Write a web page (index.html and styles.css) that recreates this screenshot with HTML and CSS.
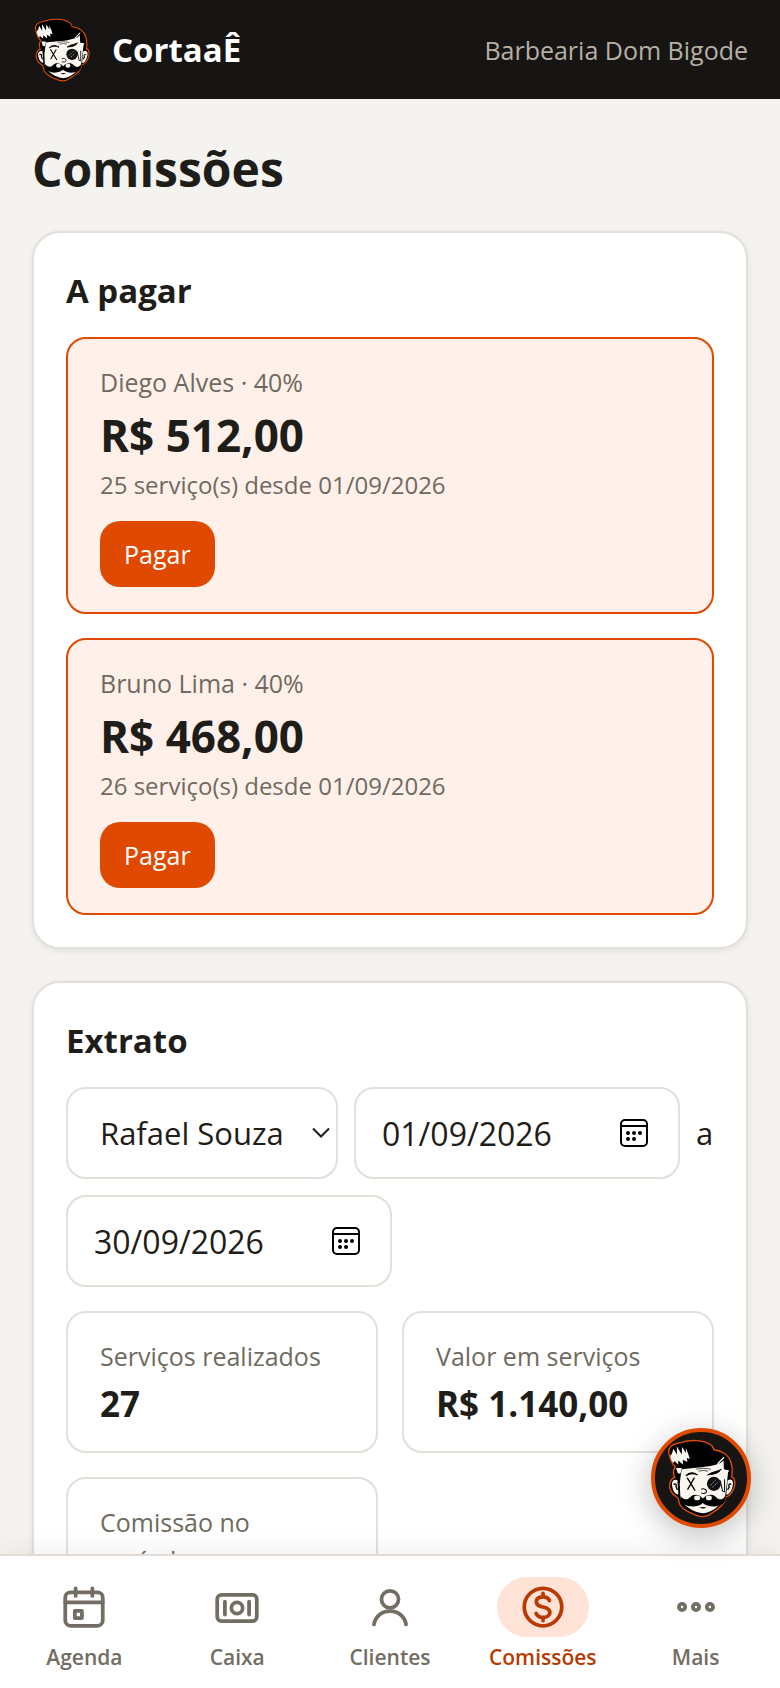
FILE: index.html
```html
<!DOCTYPE html>
<html lang="pt-BR">
<head>
  <meta charset="UTF-8" />
  <meta name="viewport" content="width=device-width, initial-scale=1.0"/>
  <title>Comissões | CortaaÊ</title>
  <link rel="stylesheet" href="styles.css">
</head>
<body>

  <svg class="sprite" aria-hidden="true">
    <symbol id="face" viewBox="72 66 206 236">
      <path d="M78 110C73 92 86 82 108 78C140 67 182 68 202 83C209 88 212 92 212 98C236 100 256 114 263 136C268 152 267 168 265 179C276 182 277 200 271 214C265 230 255 237 248 239C244 262 224 277 206 287C190 300 170 300 154 292C134 284 112 274 108 256C107 246 105 240 100 238C86 232 76 212 81 197C84 187 90 182 95 181C90 170 90 158 97 149C86 140 81 126 78 110Z" fill="#000" stroke="#e84e08" stroke-width="4"/>
      <path d="M116 156C150 152 200 152 233 137L241 130L242 158L255 160L251 196L246 234C238 262 206 286 180 288C152 285 120 266 112 242L110 200L112 182Z" fill="#faf7f0"/>
      <path d="M99 153L116 153L112 170L104 168ZM240 156L258 160L252 168L242 166Z" fill="#faf7f0"/>
      <path d="M103 189C90 184 84 196 88 210C91 222 97 232 106 231ZM253 190C264 182 273 192 268 207C265 220 259 232 249 232Z" fill="#faf7f0"/>
      <path d="M92 203C96 197 102 201 99 208L103 218M264 202C258 198 254 204 258 210L253 218" fill="none" stroke="#000" stroke-width="4"/>
      <path d="M82 115C88 111 88 104 91 95L102 113L101 88L116 112L117 90L129 108L128 92C132 103 137 112 140 126L131 123L133 135L119 128L120 142L106 130L105 142L94 132L91 138C85 132 82 123 82 115Z" fill="#faf7f0"/>
      <path d="M224 139L241 122" stroke="#faf7f0" stroke-width="4" stroke-linecap="round"/>
      <path d="M159 156Q180 151 203 156M166 162Q181 158 194 162" fill="none" stroke="#000" stroke-width="2"/>
      <path d="M128 176C138 165 150 164 164 174C154 169 140 169 128 176ZM194 173C206 163 218 165 232 158C225 170 212 172 194 173Z" fill="#000" stroke="#000" stroke-width="3"/>
      <path d="M133 183L155 219M153 183L134 216" stroke="#000" stroke-width="4" stroke-linecap="round"/>
      <circle cx="212" cy="200" r="21" fill="#111"/>
      <path d="M201 205L218 188M207 211L222 196" stroke="#ddd" stroke-width="2" stroke-dasharray="7 3"/>
      <path d="M231 190L238 222L244 224L244 186M174 216C183 213 190 217 190 222C190 229 180 230 174 227" fill="none" stroke="#000" stroke-width="3"/>
      <path d="M179 244C170 231 151 228 141 240C133 249 122 248 112 236C111 254 123 265 140 267C157 269 172 264 179 257C187 265 202 269 219 267C238 264 248 253 248 236C237 249 227 249 219 240C208 228 190 231 179 244Z" fill="#000"/>
      <ellipse cx="162" cy="242" rx="9" ry="7" fill="#faf7f0"/>
      <ellipse cx="197" cy="242" rx="9" ry="7" fill="#faf7f0"/>
      <path d="M169 271Q180 267 190 271Q180 276 169 271Z" fill="#000"/>
    </symbol>
    <symbol id="picker" viewBox="0 0 28 28">
      <rect x="1" y="1" width="26" height="26" rx="4" fill="none" stroke="#000" stroke-width="2"/>
      <path d="M1 7h26" stroke="#000" stroke-width="2"/>
      <circle cx="8" cy="14" r="2"/><circle cx="14" cy="14" r="2"/><circle cx="20" cy="14" r="2"/>
      <circle cx="8" cy="20" r="2"/><circle cx="14" cy="20" r="2"/>
    </symbol>
  </svg>

  <div class="app">
    <header class="topbar">
      <svg class="logo" aria-hidden="true"><use href="#face"/></svg>
      <span class="brand">CortaaÊ</span>
      <span class="shop">Barbearia Dom Bigode</span>
    </header>

    <main class="content">
      <h1>Comissões</h1>

      <section class="card">
        <h2>A pagar</h2>
        <div class="due-list">
          <div class="due">
            <div class="label">Diego Alves · 40%</div>
            <div class="amount">R$ 512,00</div>
            <div class="label since">25 serviço(s) desde 01/09/2026</div>
            <button class="pay" type="button">Pagar</button>
          </div>
          <div class="due">
            <div class="label">Bruno Lima · 40%</div>
            <div class="amount">R$ 468,00</div>
            <div class="label since">26 serviço(s) desde 01/09/2026</div>
            <button class="pay" type="button">Pagar</button>
          </div>
        </div>
      </section>

      <section class="card">
        <h2>Extrato</h2>
        <form class="filters">
          <div class="select">
            <select aria-label="Profissional">
              <option>Rafael Souza</option>
              <option>Diego Alves</option>
              <option>Bruno Lima</option>
            </select>
            <svg class="chevron" viewBox="0 0 18 12" aria-hidden="true"><path d="M1 1.500L9 9.500L17 1.500"/></svg>
          </div>
          <div class="date">
            <input type="text" inputmode="numeric" value="01/09/2026" aria-label="Data inicial">
            <button type="button" aria-label="Abrir calendário"><svg><use href="#picker"/></svg></button>
          </div>
          <span>a</span>
          <div class="date">
            <input type="text" inputmode="numeric" value="30/09/2026" aria-label="Data final">
            <button type="button" aria-label="Abrir calendário"><svg><use href="#picker"/></svg></button>
          </div>
        </form>

        <div class="stats">
          <div class="stat">
            <div class="label">Serviços realizados</div>
            <div class="total">27</div>
          </div>
          <div class="stat">
            <div class="label">Valor em serviços</div>
            <div class="total">R$ 1.140,00</div>
          </div>
          <div class="stat">
            <div class="label">Comissão no período</div>
            <div class="total">R$ 456,00</div>
          </div>
        </div>
      </section>
    </main>

    <nav class="tabs">
      <a href="#">
        <span class="icon"><svg viewBox="0 0 24 24"><rect x="3" y="5" width="18" height="16" rx="2.500"/><path d="M3 9.800h18M8 3v3.700M16 3v3.700"/><rect x="7.600" y="13.900" width="3.400" height="3.400"/></svg></span>
        Agenda
      </a>
      <a href="#">
        <span class="icon"><svg viewBox="0 0 24 24"><rect x="2.500" y="6.200" width="19" height="12.600" rx="2"/><circle cx="12" cy="12.500" r="2.700"/><path d="M6.200 9.400v6.200M17.800 9.400v6.200"/></svg></span>
        Caixa
      </a>
      <a href="#">
        <span class="icon"><svg viewBox="0 0 24 24"><circle cx="12" cy="8.300" r="4.100"/><path d="M4.300 20.300C5 16.500 8 14 12 14S19 16.500 19.700 20.300"/></svg></span>
        Clientes
      </a>
      <a class="active" href="#" aria-current="page">
        <span class="icon"><svg viewBox="0 0 24 24"><circle cx="12" cy="12" r="9"/><path d="M12 5.500v1.600M12 17v1.500M15.100 8.900C14.600 7.700 13.500 7.100 12 7.100C10 7.100 8.800 8 8.800 9.500C8.800 11.200 10.200 11.600 12 12C13.900 12.400 15.300 12.900 15.300 14.600C15.300 16.100 13.900 17 12 17C10.400 17 9.200 16.300 8.700 15.100"/></svg></span>
        Comissões
      </a>
      <a href="#">
        <span class="icon"><svg viewBox="0 0 24 24"><circle cx="5.300" cy="12" r="1.500"/><circle cx="12" cy="12" r="1.500"/><circle cx="18.700" cy="12" r="1.500"/></svg></span>
        Mais
      </a>
    </nav>
  </div>

  <button class="fab" type="button" aria-label="Assistente"><svg><use href="#face"/></svg></button>

</body>
</html>
```

FILE: styles.css
```css
* {
  margin: 0;
  padding: 0;
  box-sizing: border-box;
}

body {
  font-family: 'Segoe UI', 'Open Sans', sans-serif;
  font-size: 31px;
  background: #f4f3ef;
  color: #1e1d19;
}

input,
select,
button {
  font: inherit;
  color: inherit;
  border: none;
  background: none;
}

.sprite {
  display: none;
}

.app {
  height: 100vh;
  display: flex;
  flex-direction: column;
}

/* header */
.topbar {
  display: flex;
  align-items: center;
  height: 99px;
  padding: 0 32px;
  background: #161513;
  flex-shrink: 0;
}

.logo {
  width: 60px;
  height: 64px;
}

.brand {
  margin-left: 20px;
  color: #fff;
  font-size: 33px;
  font-weight: 700;
}

.shop {
  margin-left: auto;
  color: #b8b0a4;
  font-size: 25px;
}

/* content */
.content {
  flex: 1;
  min-height: 0;
  overflow-y: auto;
  scrollbar-width: none;
  padding: 32px;
}

h1 {
  font-size: 48px;
  line-height: 76px;
  margin-bottom: 24px;
}

h2 {
  font-size: 33px;
  line-height: 52px;
  margin-bottom: 20px;
}

.card {
  background: #fff;
  border: 2px solid #e3dfd9;
  border-radius: 28px;
  padding: 32px;
  margin-bottom: 32px;
  box-shadow: 0 2px 6px rgba(0, 0, 0, 0.08);
}

.label {
  color: #6f6a60;
  font-size: 25px;
  line-height: 38px;
}

.since {
  font-size: 24px;
}

.due-list {
  display: grid;
  gap: 24px;
}

.due {
  padding: 24px 32px 25px;
  border: 2px solid #e04a00;
  border-radius: 20px;
  background: #fff0ea;
}

.amount {
  font-size: 44px;
  font-weight: 700;
  line-height: 56px;
  margin: 6px 0 3px;
}

.pay {
  display: block;
  height: 66px;
  margin-top: 17px;
  padding: 0 24px;
  border-radius: 20px;
  background: #e04a00;
  color: #fff;
  font-size: 25px;
  cursor: pointer;
}

/* filters */
.filters {
  display: flex;
  flex-wrap: wrap;
  align-items: center;
  gap: 16px;
  margin-bottom: 24px;
}

.select,
.date {
  height: 92px;
  border: 2px solid #e3dfd9;
  border-radius: 20px;
  background: #fff;
}

.select {
  position: relative;
  width: 272px;
}

.select select {
  width: 100%;
  height: 100%;
  padding: 0 48px 0 32px;
  appearance: none;
  border-radius: 20px;
}

.chevron {
  position: absolute;
  right: 6px;
  top: 38px;
  width: 18px;
  height: 12px;
  fill: none;
  stroke: #1e1d19;
  stroke-width: 2;
  pointer-events: none;
}

.date {
  display: flex;
  align-items: center;
  width: 326px;
  padding: 0 30px 0 26px;
  font-size: 32px;
}

.date input {
  flex: 1;
  min-width: 0;
}

.date button,
.date svg {
  display: block;
  width: 28px;
  height: 28px;
}

/* totals */
.stats {
  display: grid;
  grid-template-columns: 1fr 1fr;
  gap: 24px;
}

.stat {
  padding: 24px 32px;
  border: 2px solid #e3dfd9;
  border-radius: 20px;
}

.total {
  font-size: 35px;
  font-weight: 700;
  line-height: 46px;
  margin-top: 6px;
}

/* bottom tabs */
.tabs {
  position: relative;
  display: grid;
  grid-template-columns: repeat(5, 1fr);
  flex-shrink: 0;
  height: 134px;
  padding: 21px 8px 0;
  border-top: 2px solid #e3dcd6;
  background: #fff;
  box-shadow: 0 -4px 24px rgba(0, 0, 0, 0.06);
}

.tabs a {
  display: flex;
  flex-direction: column;
  align-items: center;
  gap: 4px;
  color: #736d63;
  font-size: 21px;
  font-weight: 600;
  line-height: 32px;
  text-decoration: none;
}

.icon {
  display: flex;
  align-items: center;
  justify-content: center;
  width: 92px;
  height: 60px;
  border-radius: 30px;
}

.icon svg {
  width: 50px;
  height: 50px;
  fill: none;
  stroke: currentColor;
  stroke-width: 1.8;
  stroke-linecap: round;
  stroke-linejoin: round;
}

.tabs .active {
  color: #b83a00;
}

.active .icon {
  background: #ffe3d6;
}

.fab {
  position: fixed;
  right: 29px;
  bottom: 160px;
  display: flex;
  align-items: center;
  justify-content: center;
  width: 100px;
  height: 100px;
  border: 4px solid #e04a00;
  border-radius: 50%;
  background: #161513;
  box-shadow: 0 8px 32px rgba(0, 0, 0, 0.25);
  cursor: pointer;
}

.fab svg {
  width: 69px;
  height: 79px;
  flex-shrink: 0;
}
```
